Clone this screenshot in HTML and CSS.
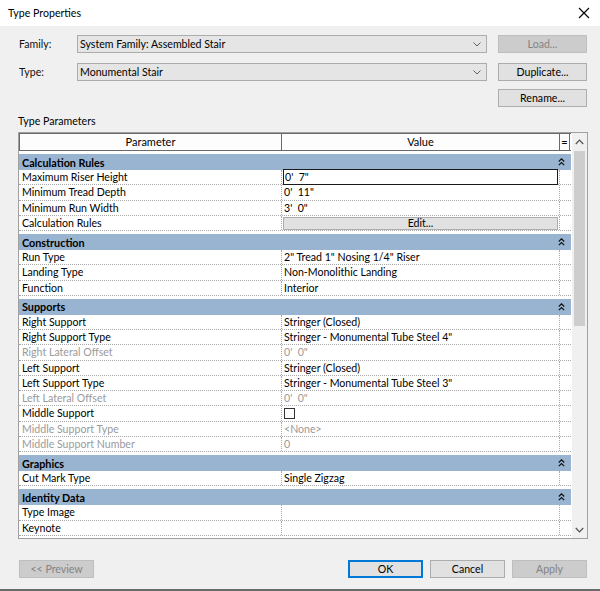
FILE: index.html
```html
<!DOCTYPE html>
<html>
<head>
<meta charset="utf-8">
<title>Type Properties</title>
<link rel="stylesheet" href="styles.css">
</head>
<body>
<div class="dialog">
  <div class="titlebar">
    <span class="title">Type Properties</span>
    <svg class="close" width="12" height="12" viewBox="0 0 12 12"><path d="M1 1L11 11M11 1L1 11" stroke="#000" stroke-width="1.1" fill="none"/></svg>
  </div>
  <div class="content">
    <div class="topform">
      <span class="lbl r1">Family:</span>
      <div class="combo r1"><span>System Family: Assembled Stair</span><svg class="chev" width="8" height="5" viewBox="0 0 8 5"><path d="M0.5 0.5L4 4L7.5 0.5" stroke="#606060" fill="none"/></svg></div>
      <button class="btn disabled r1 bcol">Load...</button>
      <span class="lbl r2">Type:</span>
      <div class="combo r2"><span>Monumental Stair</span><svg class="chev" width="8" height="5" viewBox="0 0 8 5"><path d="M0.5 0.5L4 4L7.5 0.5" stroke="#606060" fill="none"/></svg></div>
      <button class="btn r2 bcol">Duplicate...</button>
      <button class="btn r3 bcol">Rename...</button>
    </div>

    <div class="tp-label">Type Parameters</div>

    <div class="grid">
      <div class="table">
        <div class="thead">
          <div class="th pc">Parameter</div>
          <div class="th vc">Value</div>
          <div class="th ec">=</div>
        </div>

        <div class="group">
          <div class="ghead"><span>Calculation Rules</span><svg class="collapse" width="7" height="8" viewBox="0 0 7 8"><path d="M0.8 3.5L3.5 0.8L6.2 3.5M0.8 7.2L3.5 4.5L6.2 7.2" stroke="#111" stroke-width="1.2" fill="none"/></svg></div>
          <div class="row"><div class="pc">Maximum Riser Height</div><div class="vc"><span class="editing">0'  7"</span></div><div class="ec"></div></div>
          <div class="row"><div class="pc">Minimum Tread Depth</div><div class="vc">0'  11"</div><div class="ec"></div></div>
          <div class="row"><div class="pc">Minimum Run Width</div><div class="vc">3'  0"</div><div class="ec"></div></div>
          <div class="row"><div class="pc">Calculation Rules</div><div class="vc"><span class="editbtn">Edit...</span></div><div class="ec"></div></div>
        </div>

        <div class="group">
          <div class="ghead"><span>Construction</span><svg class="collapse" width="7" height="8" viewBox="0 0 7 8"><path d="M0.8 3.5L3.5 0.8L6.2 3.5M0.8 7.2L3.5 4.5L6.2 7.2" stroke="#111" stroke-width="1.2" fill="none"/></svg></div>
          <div class="row"><div class="pc">Run Type</div><div class="vc">2" Tread 1" Nosing 1/4" Riser</div><div class="ec"></div></div>
          <div class="row"><div class="pc">Landing Type</div><div class="vc">Non-Monolithic Landing</div><div class="ec"></div></div>
          <div class="row"><div class="pc">Function</div><div class="vc">Interior</div><div class="ec"></div></div>
        </div>

        <div class="group">
          <div class="ghead"><span>Supports</span><svg class="collapse" width="7" height="8" viewBox="0 0 7 8"><path d="M0.8 3.5L3.5 0.8L6.2 3.5M0.8 7.2L3.5 4.5L6.2 7.2" stroke="#111" stroke-width="1.2" fill="none"/></svg></div>
          <div class="row"><div class="pc">Right Support</div><div class="vc">Stringer (Closed)</div><div class="ec"></div></div>
          <div class="row"><div class="pc">Right Support Type</div><div class="vc">Stringer - Monumental Tube Steel 4"</div><div class="ec"></div></div>
          <div class="row dim"><div class="pc">Right Lateral Offset</div><div class="vc">0'  0"</div><div class="ec"></div></div>
          <div class="row"><div class="pc">Left Support</div><div class="vc">Stringer (Closed)</div><div class="ec"></div></div>
          <div class="row"><div class="pc">Left Support Type</div><div class="vc">Stringer - Monumental Tube Steel 3"</div><div class="ec"></div></div>
          <div class="row dim"><div class="pc">Left Lateral Offset</div><div class="vc">0'  0"</div><div class="ec"></div></div>
          <div class="row"><div class="pc">Middle Support</div><div class="vc"><span class="checkbox"></span></div><div class="ec"></div></div>
          <div class="row dim"><div class="pc">Middle Support Type</div><div class="vc">&lt;None&gt;</div><div class="ec"></div></div>
          <div class="row dim"><div class="pc">Middle Support Number</div><div class="vc">0</div><div class="ec"></div></div>
        </div>

        <div class="group">
          <div class="ghead"><span>Graphics</span><svg class="collapse" width="7" height="8" viewBox="0 0 7 8"><path d="M0.8 3.5L3.5 0.8L6.2 3.5M0.8 7.2L3.5 4.5L6.2 7.2" stroke="#111" stroke-width="1.2" fill="none"/></svg></div>
          <div class="row"><div class="pc">Cut Mark Type</div><div class="vc">Single Zigzag</div><div class="ec"></div></div>
        </div>

        <div class="group">
          <div class="ghead"><span>Identity Data</span><svg class="collapse" width="7" height="8" viewBox="0 0 7 8"><path d="M0.8 3.5L3.5 0.8L6.2 3.5M0.8 7.2L3.5 4.5L6.2 7.2" stroke="#111" stroke-width="1.2" fill="none"/></svg></div>
          <div class="row"><div class="pc">Type Image</div><div class="vc"></div><div class="ec"></div></div>
          <div class="row"><div class="pc">Keynote</div><div class="vc"></div><div class="ec"></div></div>
        </div>
      </div>

      <div class="scrollbar">
        <svg class="sarrow" width="9" height="6" viewBox="0 0 9 6"><path d="M0.8 5L4.5 1.2L8.2 5" stroke="#505050" stroke-width="1.2" fill="none"/></svg>
        <div class="track"><div class="thumb"></div></div>
        <svg class="sarrow" width="9" height="6" viewBox="0 0 9 6"><path d="M0.8 1L4.5 4.8L8.2 1" stroke="#505050" stroke-width="1.2" fill="none"/></svg>
      </div>
    </div>

    <div class="footer">
      <button class="btn disabled wide">&lt;&lt; Preview</button>
      <div class="spacer"></div>
      <button class="btn default wide">OK</button>
      <button class="btn wide">Cancel</button>
      <button class="btn disabled wide">Apply</button>
    </div>
  </div>
  <div class="taskedge"></div>
</div>
</body>
</html>
```

FILE: styles.css
```css
* { box-sizing: border-box; }
html, body { margin: 0; padding: 0; }
body {
  width: 600px;
  height: 591px;
  overflow: hidden;
  background: #f0f0f0;
  font-family: "Lato", "Noto Sans", sans-serif;
  font-size: 10.6px;
  color: #000;
  -webkit-font-smoothing: antialiased;
}
.dialog {
  width: 600px;
  height: 591px;
  display: flex;
  flex-direction: column;
  background: #f0f0f0;
}
.titlebar {
  height: 26px;
  background: #fff;
  display: flex;
  align-items: center;
  padding: 0 10px 0 8px;
  flex: none;
}
.title { font-size: 10.6px; flex: 1; }
.close { display: block; }

.content {
  flex: 1;
  padding: 9px 13px 0 18px;
  display: flex;
  flex-direction: column;
}

.topform {
  display: grid;
  grid-template-columns: 59px 410px 11px 89px;
  grid-template-rows: 18px 10px 18px 8px 18px;
}
.r1 { grid-row: 1; }
.r2 { grid-row: 3; }
.r3 { grid-row: 5; }
.lbl { grid-column: 1; line-height: 18px; padding-left: 1px; color: #111; }
.combo {
  grid-column: 2;
  background: #e5e5e5;
  border: 1px solid #acacac;
  display: flex;
  align-items: center;
  padding: 0 0 0 2px;
  line-height: 16px;
}
.combo span { flex: 1; }
.chev { margin-right: 5px; }
.bcol { grid-column: 4; }

.btn {
  font-family: inherit;
  font-size: 10.6px;
  color: #000;
  background: #e1e1e1;
  border: 1px solid #adadad;
  padding: 0;
  margin: 0;
  height: 18px;
  line-height: 16px;
  text-align: center;
}
.btn.disabled {
  background: #cccccc;
  border-color: #bfbfbf;
  color: #838383;
}
.btn.default {
  border: 2px solid #0078d7;
  line-height: 14px;
}

.tp-label {
  margin-top: 7px;
  line-height: 14px;
  height: 14px;
}

.grid {
  margin-top: 4px;
  height: 407px;
  width: 570px;
  border: 1px solid #a0a0a0;
  display: flex;
  background: #fff;
}
.table {
  width: 552px;
  display: flex;
  flex-direction: column;
  background: #fff;
}
.thead {
  height: 18px;
  display: flex;
  border-top: 1px solid #6a6a6a;
  border-bottom: 1px solid #6a6a6a;
  border-left: 1px solid #6a6a6a;
  background: #fdfdfd;
  font-size: 11px;
}
.th {
  text-align: center;
  line-height: 16px;
  border-right: 1px solid #6a6a6a;
}
.pc { width: 263px; flex: none; }
.vc { width: 278px; flex: none; }
.ec { width: 11px; flex: none; }
.thead .pc { width: 262px; }
.thead .ec { width: 10px; }

.group { padding-top: 3px; }
.ghead {
  height: 16px;
  background: #99b4d1;
  display: flex;
  align-items: center;
  justify-content: space-between;
  padding: 0 6px 0 3px;
  font-weight: bold;
  font-size: 10.8px;
}
.row {
  height: 15.25px;
  display: flex;
  border-bottom: 1px dotted #a8a8a8;
  line-height: 14px;
}
.row .pc {
  padding-left: 3px;
  border-right: 1px dotted #a8a8a8;
  white-space: nowrap;
}
.row .vc {
  padding-left: 2px;
  border-right: 1px dotted #a8a8a8;
  white-space: pre;
}
.row.dim { color: #9a9a9a; }
.editing {
  display: block;
  margin: -1px 1px 0 -1px;
  height: 16px;
  border: 1px solid #1a1a1a;
  padding-left: 1px;
  line-height: 14px;
}
.editbtn {
  display: block;
  margin: 1px 1px 0 -1px;
  height: 13px;
  background: #e1e1e1;
  border: 1px solid #adadad;
  text-align: center;
  line-height: 11px;
}
.checkbox {
  display: block;
  width: 11px;
  height: 11px;
  margin-top: 2px;
  border: 1px solid #333;
  background: #fff;
}

.scrollbar {
  flex: 1;
  margin-left: 1px;
  background: #f0f0f0;
  display: flex;
  flex-direction: column;
  align-items: center;
  padding: 6px 0 5px;
}
.track {
  flex: 1;
  width: 100%;
  padding: 6px 1px 0;
}
.thumb {
  height: 175px;
  background: #cdcdcd;
  margin: 0 1px;
}

.footer {
  margin-top: 21px;
  display: flex;
  gap: 7px;
  padding-left: 1px;
}
.spacer { flex: 1; }
.wide { width: 75px; }
.taskedge {
  height: 2px;
  background: #6a6a6a;
  flex: none;
}
```
